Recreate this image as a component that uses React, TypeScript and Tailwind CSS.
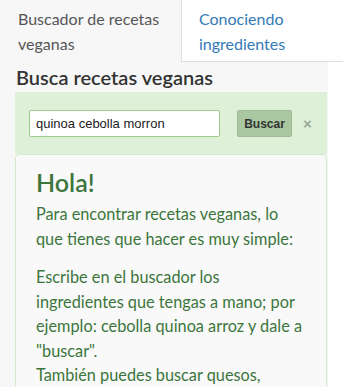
import { useState } from "react";

const sans = { fontFamily: 'Lato, "Noto Sans", sans-serif' };
const arial = { fontFamily: '"Liberation Sans", Arial, sans-serif' };

export default function App() {
  const [query, setQuery] = useState("quinoa cebolla morron");

  return (
    <div className="min-h-[387px] w-[343px] bg-white" style={sans}>
      <div className="flex h-[62px]">
        <div className="w-[181px] bg-[#f7f7f7] px-[18px] pt-[6px] text-[16px] leading-[25px] text-[#555]">
          Buscador de recetas veganas
        </div>
        <div className="flex-1 border-b border-l border-[#ddd] bg-white px-[17px] pt-[6px] text-[16px] leading-[25px] text-[#337ab7]">
          Conociendo ingredientes
        </div>
      </div>

      <div className="w-[328px] bg-[#f7f7f7] pb-4 pl-[15px] pr-px">
        <h2 className="pl-[1px] text-[20px] font-semibold leading-[30px] text-[#333]">
          Busca recetas veganas
        </h2>

        <div className="flex h-[62px] items-center bg-[#dff0d8] px-[14px] pt-px">
          <input
            value={query}
            onChange={(e) => setQuery(e.target.value)}
            className="h-[27px] w-[191px] shrink-0 rounded-[2px] border border-[#9fcd8c] bg-white px-[6px] text-[13px] text-[#222] outline-none"
            style={arial}
          />
          <button
            className="ml-[17px] h-[27px] w-[55px] shrink-0 rounded-[2px] border border-[#9dbb94] bg-[#a9c7a0] text-[12px] font-bold text-[#333]"
            style={arial}
          >
            Buscar
          </button>
          <span className="ml-[11px] text-[15px] font-bold leading-none text-[#9aa89a]" style={arial}>
            ×
          </span>
        </div>

        <div className="rounded-t-[4px] border border-[#d6e9c6] bg-[#f9f9f9] px-[20px] pb-6 pt-[10px] text-[#3c763d]">
          <h1 className="text-[25px] font-semibold leading-[34px]">Hola!</h1>
          <p className="mt-[2px] text-[16.3px] leading-[25px]">
            Para encontrar recetas veganas, lo que tienes que hacer es muy simple:
          </p>
          <p className="mt-[14px] text-[16.3px] leading-[24.5px]">
            Escribe en el buscador los ingredientes que tengas a mano; por ejemplo: cebolla quinoa arroz y dale a "buscar".
            <br />
            También puedes buscar quesos, leches, postres y más.
          </p>
        </div>
      </div>
    </div>
  );
}
